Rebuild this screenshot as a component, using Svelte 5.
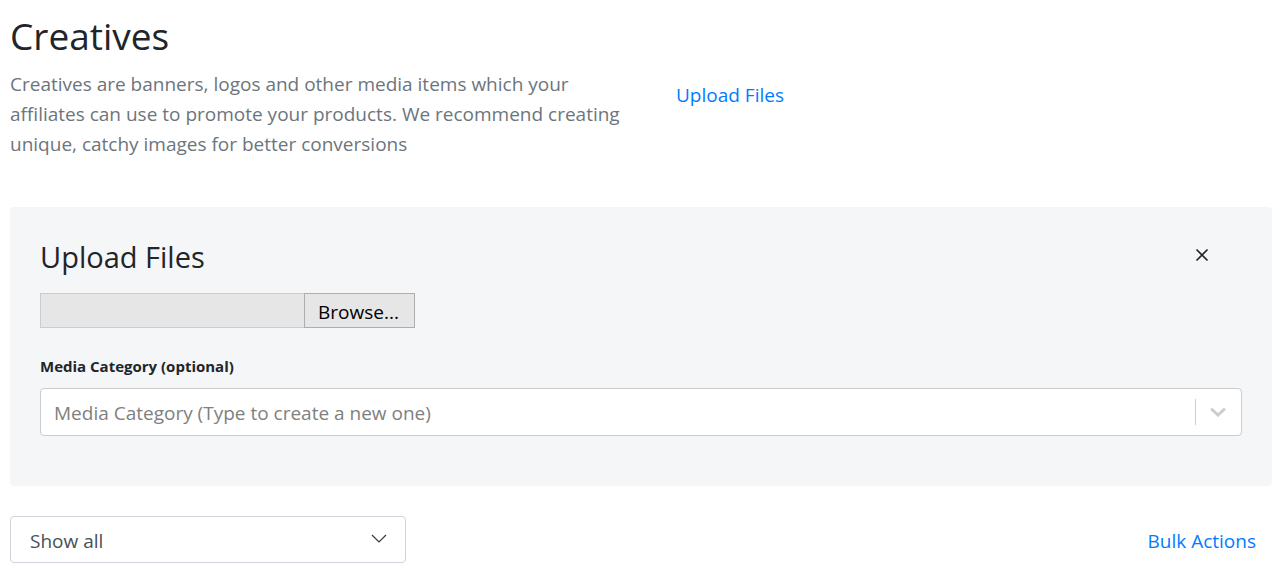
<script>
  let open = $state(true);
  let category = $state('');
  let filter = $state('all');
</script>

<main>
  <header class="intro">
    <div class="about">
      <h1>Creatives</h1>
      <p>Creatives are banners, logos and other media items which your affiliates can use to promote your products. We recommend creating unique, catchy images for better conversions</p>
    </div>
    <div class="action"><a href="#upload">Upload Files</a></div>
  </header>

  {#if open}
    <section class="panel" id="upload">
      <div class="panel-head">
        <h2>Upload Files</h2>
        <button class="close" aria-label="Close" onclick={() => (open = false)}>
          <svg width="14" height="14" viewBox="0 0 14 14"><path d="M1.5 1.5l11 11M12.5 1.5l-11 11" fill="none" stroke="#212529" stroke-width="1.7" /></svg>
        </button>
      </div>
      <div class="file">
        <input type="text" aria-label="Selected file" readonly />
        <button>Browse...</button>
      </div>
      <label for="category">Media Category (optional)</label>
      <div class="combo">
        <input id="category" bind:value={category} placeholder="Media Category (Type to create a new one)" />
        <button aria-label="Show categories">
          <svg width="16" height="10" viewBox="0 0 16 10"><path d="M2 2.5l6 5.5 6-5.5" fill="none" stroke="#ccc" stroke-width="3" stroke-linecap="round" /></svg>
        </button>
      </div>
    </section>
  {/if}

  <footer>
    <div class="filter">
      <select aria-label="Filter creatives" bind:value={filter}>
        <option value="all">Show all</option>
      </select>
      <svg width="16" height="10" viewBox="0 0 16 10"><path d="M1 1l7 7 7-7" fill="none" stroke="#343a40" stroke-width="1.2" /></svg>
    </div>
    <a href="#bulk">Bulk Actions</a>
  </footer>
</main>

<style>
  :global(body) { background: #fff; }
  main {
    padding: 12px 10px 10px;
    font-family: "Segoe UI", "Open Sans", "Noto Sans", sans-serif;
    font-size: 19px;
    line-height: 30px;
    color: #212529;
  }
  main * { box-sizing: border-box; }
  h1, h2, p { margin: 0; font-weight: 400; }
  h1 { font-size: 37px; line-height: 48px; margin-bottom: 9px; }
  h2 { font-size: 29px; line-height: 36px; }
  a { color: #007bff; text-decoration: none; }
  button, input, select { font: inherit; margin: 0; border-radius: 0; }
  button { cursor: pointer; }
  .intro { display: grid; grid-template-columns: 1fr 1fr; gap: 30px; }
  p { color: #6c757d; }
  .action { align-self: center; padding: 18px 20px 0; }
  .panel { margin-top: 48px; padding: 32px 30px 50px; background: #f5f6f8; border-radius: 4px; }
  .panel-head { display: flex; justify-content: space-between; align-items: center; padding-right: 32px; }
  .close { display: flex; padding: 0 1px 4px; border: 0; background: none; }
  .file { display: flex; width: 375px; height: 35px; margin-top: 18px; }
  .file input { flex: 1; min-width: 0; background: #e6e6e6; border: 1px solid #ccc; border-right: 0; }
  .file button { width: 111px; padding: 2px 2px 0 0; background: #e6e6e6; border: 1px solid #adadad; color: #000; }
  label { display: block; margin: 27px 0 11px; font-size: 15px; line-height: 22px; font-weight: 700; }
  .combo { display: flex; align-items: center; height: 48px; background: #fff; border: 1px solid #ccc; border-radius: 4px; }
  .combo input { flex: 1; min-width: 0; padding: 2px 13px 0; border: 0; background: none; outline: 0; }
  .combo input::placeholder { color: #808080; opacity: 1; }
  .combo button { display: flex; align-items: center; justify-content: center; width: 46px; height: 26px; padding: 0 1px 0 0; border: 0; border-left: 1px solid #ccc; background: none; }
  footer { display: flex; align-items: center; justify-content: space-between; margin-top: 30px; padding-right: 16px; }
  footer > a { padding-top: 2px; }
  .filter { position: relative; width: 396px; }
  select { display: block; width: 100%; height: 47px; padding: 2px 19px 0; appearance: none; background: #fff; border: 1px solid #ced4da; border-radius: 4px; color: #495057; }
  .filter svg { position: absolute; right: 19px; top: 18px; pointer-events: none; }
</style>
